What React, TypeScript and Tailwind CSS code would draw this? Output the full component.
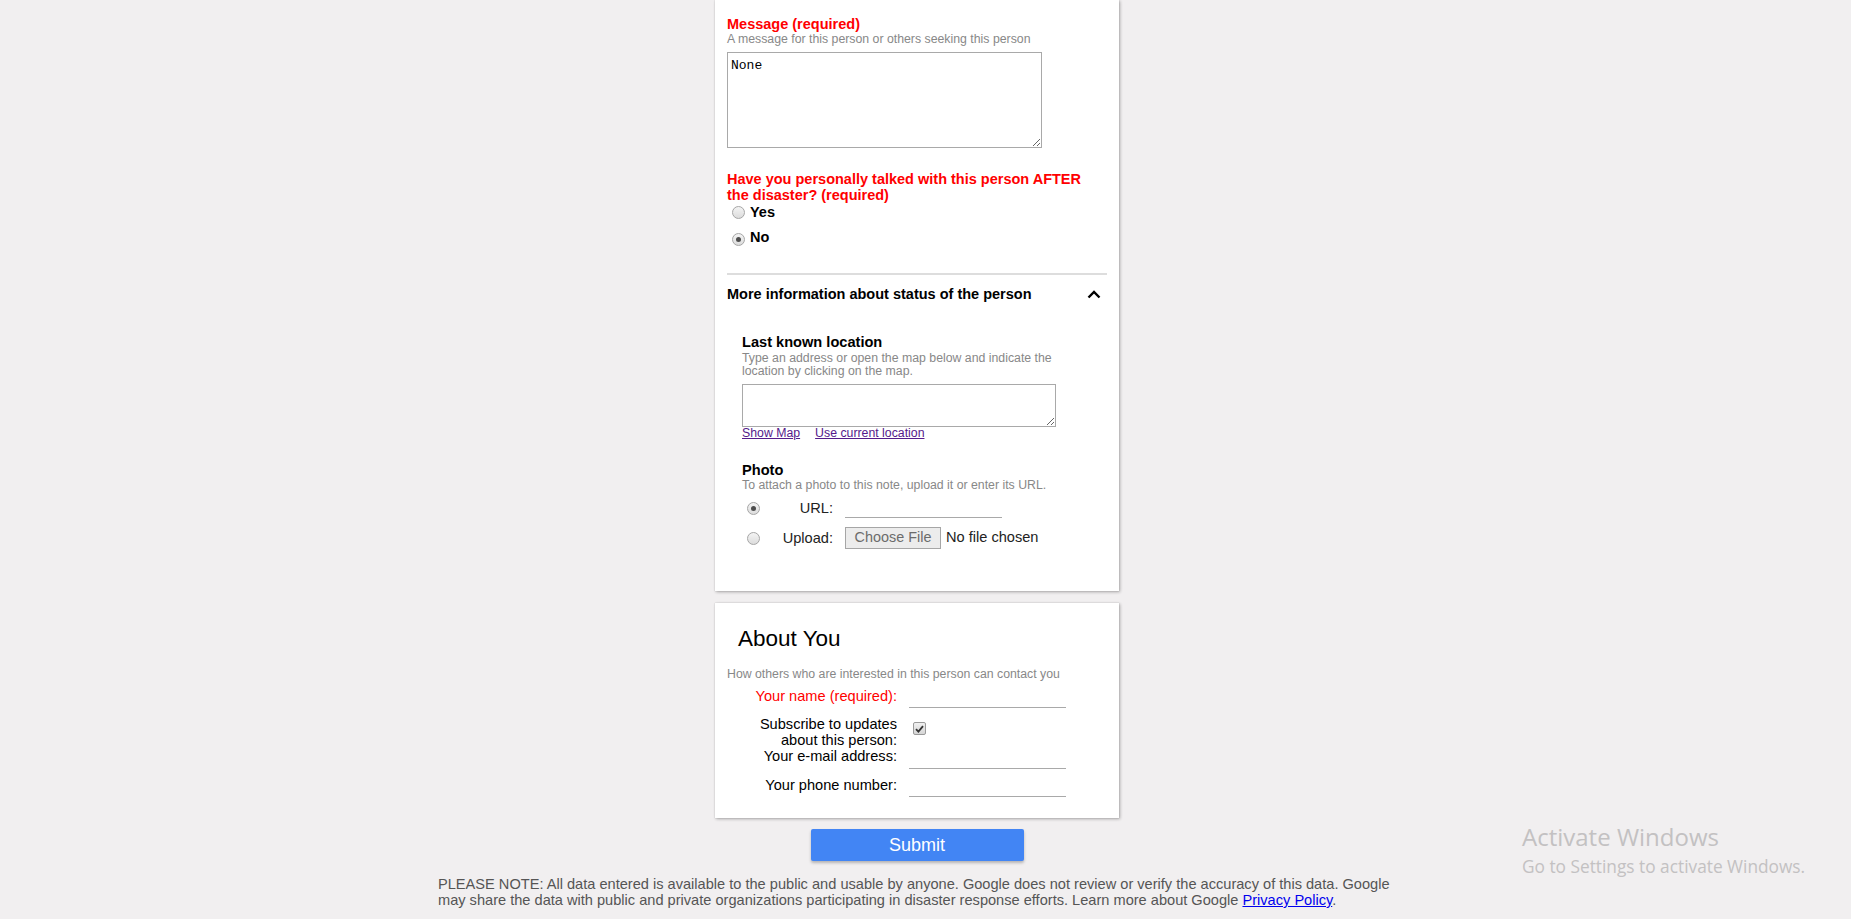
import React from 'react';

function Radio({ checked }: { checked?: boolean }) {
  return (
    <span className="ml-[5px] mr-[5px] flex h-[13px] w-[13px] shrink-0 items-center justify-center rounded-full border border-[#a6a6a6] bg-gradient-to-b from-[#f4f4f4] to-[#dcdcdc]">
      {checked && <span className="h-[5px] w-[5px] rounded-full bg-[#4d4d4d]" />}
    </span>
  );
}

function Underline({ h = 'h-[22px]' }: { h?: string }) {
  return <div className={`ml-[12px] w-[157px] border-b border-[#a9a9a9] ${h}`} />;
}

export default function App() {
  return (
    <div className="relative min-h-screen bg-[#f1eff0] pr-[17px] font-['Liberation_Sans',Arial,sans-serif] text-black">
      <div className="mx-auto flex w-[404px] flex-col">
        {/* Note details (continued) */}
        <div className="bg-white px-3 pt-4 pb-[41px] shadow-[1px_1px_3px_rgba(0,0,0,0.3),0_0_1px_rgba(0,0,0,0.2)]">
          <p className="text-[14.5px] leading-[17px] font-bold text-[#ff0000]">Message (required)</p>
          <p className="text-[12.3px] leading-[13px] text-[#888]">A message for this person or others seeking this person</p>
          <textarea
            readOnly
            defaultValue="None"
            className="mt-[6px] block h-[96px] w-[315px] resize border border-[#a9a9a9] px-[3px] pt-[5px] pb-[2px] font-['Liberation_Mono',monospace] text-[13px] leading-[15px] text-black outline-none"
          />

          <p className="mt-[23px] text-[14.5px] leading-[16px] font-bold text-[#ff0000]">
            Have you personally talked with this person AFTER
            <br />
            the disaster? (required)
          </p>
          <div className="flex flex-col gap-[7px]">
            <label className="flex h-[18px] items-center text-[14.5px] leading-[18px] font-bold">
              <Radio />
              Yes
            </label>
            <label className="flex h-[18px] items-center text-[14.5px] leading-[18px] font-bold">
              <span className="mt-[4px] flex">
                <Radio checked />
              </span>
              No
            </label>
          </div>

          <div className="mt-[27px] h-[2px] bg-[#dddddd]" />

          <div className="mt-[10px] flex h-[18px] items-center justify-between">
            <span className="text-[14.5px] leading-[18px] font-bold">More information about status of the person</span>
            <svg width="14" height="9" viewBox="0 0 14 9" className="mr-[6px]">
              <polyline points="1.5,7.5 7,2 12.5,7.5" fill="none" stroke="#000" strokeWidth="2.4" />
            </svg>
          </div>

          <div className="pl-[15px]">
            <p className="mt-[31px] text-[14.6px] leading-[17px] font-bold">Last known location</p>
            <p className="mt-[1px] text-[12.3px] leading-[13px] text-[#888]">
              Type an address or open the map below and indicate the
              <br />
              location by clicking on the map.
            </p>
            <textarea
              readOnly
              className="mt-[6px] block h-[43px] w-[314px] resize border border-[#a9a9a9] outline-none"
            />
            <div className="flex gap-[15px] text-[12.3px] leading-[13px] text-[#551a8b]">
              <a className="underline">Show Map</a>
              <a className="underline">Use current location</a>
            </div>

            <p className="mt-[22px] text-[14.6px] leading-[17px] font-bold">Photo</p>
            <p className="text-[12.3px] leading-[13px] text-[#888]">To attach a photo to this note, upload it or enter its URL.</p>

            <div className="mt-[4px] flex h-[24px] items-center">
              <Radio checked />
              <span className="w-[68px] text-right text-[14.6px] leading-[18px] text-[#222]">URL:</span>
              <Underline h="h-[20px]" />
            </div>
            <div className="mt-[6px] flex h-[24px] items-center">
              <Radio />
              <span className="w-[68px] text-right text-[14.6px] leading-[18px] text-[#222]">Upload:</span>
              <span className="ml-[12px] flex h-[22px] w-[96px] items-center justify-center border border-[#a6a6a6] bg-[#ececec] text-[14.4px] text-[#6b6b6b]">
                Choose File
              </span>
              <span className="ml-[5px] text-[14.6px] text-[#222]">No file chosen</span>
            </div>
          </div>
        </div>

        {/* About you */}
        <div className="mt-[12px] bg-white px-3 pt-[23px] pb-[21px] shadow-[1px_1px_3px_rgba(0,0,0,0.3),0_0_1px_rgba(0,0,0,0.2)]">
          <h2 className="pl-[11px] text-[22.5px] leading-[26px] font-normal">About You</h2>
          <p className="mt-[16px] text-[12.3px] leading-[13px] text-[#888]">How others who are interested in this person can contact you</p>

          <div className="mt-[5px] flex h-[22px] items-end">
            <span className="mb-[3px] w-[170px] text-right text-[14.6px] leading-[17px] text-[#ff0000]">Your name (required):</span>
            <Underline />
          </div>
          <div className="mt-[8px] flex items-start">
            <span className="w-[170px] text-right text-[14.6px] leading-[16px]">
              Subscribe to updates
              <br />
              about this person:
            </span>
            <span className="mt-[6px] ml-[16px] flex h-[13px] w-[13px] items-center justify-center rounded-[2px] border border-[#9a9a9a] bg-gradient-to-b from-[#f0f0f0] to-[#d6d6d6]">
              <svg width="9" height="8" viewBox="0 0 9 8">
                <polyline points="1,4.2 3.4,6.6 8,1.2" fill="none" stroke="#333" strokeWidth="1.8" />
              </svg>
            </span>
          </div>
          <div className="flex h-[21px] items-start">
            <span className="w-[170px] text-right text-[14.6px] leading-[16px]">Your e-mail address:</span>
            <Underline h="h-[21px]" />
          </div>
          <div className="mt-[6px] flex h-[22px] items-end">
            <span className="mb-[3px] w-[170px] text-right text-[14.6px] leading-[17px]">Your phone number:</span>
            <Underline />
          </div>
        </div>

        <button className="mt-[11px] h-[32px] w-[213px] self-center rounded-[2px] bg-[#4285f4] text-[18px] text-white shadow-[0_2px_3px_rgba(0,0,0,0.25)]">
          Submit
        </button>
      </div>

      <p className="mx-auto mt-[15px] w-[958px] text-[14.6px] leading-[16px] text-[#555]">
        PLEASE NOTE: All data entered is available to the public and usable by anyone. Google does not review or verify the accuracy of this data. Google may share the data with public and private organizations participating in disaster response efforts. Learn more about Google{' '}
        <a className="text-[#0000ee] underline">Privacy Policy</a>.
      </p>

      {/* Windows watermark */}
      <div className="absolute top-[821px] left-[1522px] font-['Open_Sans',sans-serif] text-[#c3c1c2]">
        <p className="text-[24px] leading-[32px]">Activate Windows</p>
        <p className="mt-[2px] text-[17.3px] leading-[24px]">Go to Settings to activate Windows.</p>
      </div>
    </div>
  );
}
